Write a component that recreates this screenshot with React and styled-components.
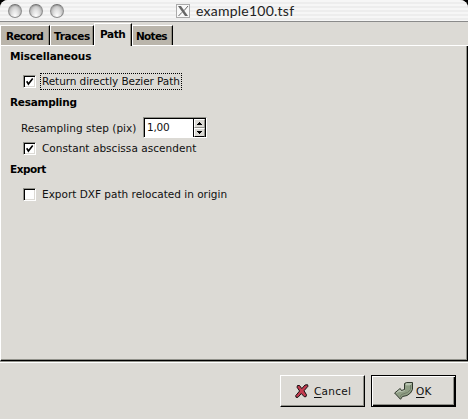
import React from "react";
import styled, { createGlobalStyle, css } from "styled-components";

const Global = createGlobalStyle`
  * { box-sizing: border-box; }
  html, body { margin: 0; padding: 0; background: #000; overflow: hidden; }
`;

const Window = styled.div`
  width: 468px;
  height: 419px;
  display: flex;
  flex-direction: column;
  background: #dcdad5;
  border-radius: 8px 8px 0 0;
  overflow: hidden;
  font-family: "DejaVu Sans", sans-serif;
  font-size: 10.5px;
  line-height: 14px;
  color: #101010;
  white-space: nowrap;
  cursor: default;
`;

const TitleBar = styled.header`
  height: 22px;
  flex: none;
  display: flex;
  align-items: center;
  padding: 0 0 0 8px;
  border-bottom: 1px solid #8a8a8a;
  background: repeating-linear-gradient(180deg, #f6f6f6 0 2px, #ededed 2px 4px);
`;

const Lights = styled.div`
  display: flex;
  gap: 7px;
  width: 168px;
`;

const Light = styled.span`
  width: 14px;
  height: 14px;
  border-radius: 50%;
  border: 1px solid #8d8d8d;
  border-top-color: #707070;
  background: radial-gradient(ellipse at 50% 95%, #fff 0, #e2e2e2 40%, #b8b8b8 80%);
  box-shadow: inset 0 1px 1px #a2a2a2;
`;

const Title = styled.h1`
  margin: 0 0 0 6px;
  font: 14px/20px "Lato", sans-serif;
  letter-spacing: 0.24px;
  color: #222;
  padding-top: 1px;
`;

const TabStrip = styled.nav`
  height: 24px;
  flex: none;
  display: flex;
  align-items: flex-end;
  border-bottom: 1px solid #fff;
`;

const Tab = styled.button`
  width: ${(p) => p.$w}px;
  height: 20px;
  padding: 0 0 0 ${(p) => p.$pad}px;
  border: 0 solid;
  border-width: 1px 1px 0 1px;
  border-color: #fff #000 #000 #fff;
  background: #bab5ab;
  box-shadow: inset -1px 0 #918e83;
  font: bold 10.5px/18px "DejaVu Sans", sans-serif;
  letter-spacing: ${(p) => p.$ls}px;
  color: #000;
  text-align: left;
  ${(p) => p.$active && css`
    height: 23px;
    margin-bottom: -1px;
    padding-bottom: 2px;
    background: #dcdad5;
  `}
`;

const Page = styled.main`
  height: 315px;
  flex: none;
  border: solid;
  border-width: 0 1px 1px 1px;
  border-color: #000 #000 #000 #fff;
  box-shadow: inset -1px -1px #91918a;
  padding: 3px 0 0 9px;
`;

const Heading = styled.h2`
  margin: ${(p) => p.$top || 0}px 0 0;
  font-size: 10.5px;
  line-height: 14px;
  height: 14px;
  color: #000;
  letter-spacing: ${(p) => p.$ls || 0}px;
`;

const Row = styled.label`
  display: flex;
  align-items: center;
  height: ${(p) => p.$h}px;
  margin: ${(p) => p.$m};
`;

const Box = styled.span`
  width: 13px;
  height: 13px;
  flex: none;
  border: 1px solid;
  border-color: #91918a #fff #fff #91918a;
  box-shadow: inset 1px 1px #000, inset -1px -1px #dcdad5;
  background: #fff;
  display: block;
  svg { display: block; }
`;

const Caption = styled.span`
  margin-left: 4px;
  padding: 0 1px;
  height: 17px;
  line-height: 15px;
  border: 1px ${(p) => (p.$focus ? "dotted #000" : "solid transparent")};
  width: ${(p) => (p.$focus ? "142px" : "auto")};
  letter-spacing: ${(p) => p.$ls || 0}px;
`;

const FieldName = styled.span`
  width: 122px;
  letter-spacing: 0.04px;
`;

const Spin = styled.span`
  width: 64px;
  height: 21px;
  display: flex;
  border: 1px solid;
  border-color: #91918a #fff #fff #91918a;
  box-shadow: inset 1px 1px #000;
  background: #fff;
  padding: 1px 0 0 1px;
`;

const SpinValue = styled.span`
  flex: 1;
  padding-left: 2px;
  line-height: 16px;
  letter-spacing: -0.2px;
`;

const Steps = styled.span`
  width: 13px;
  display: flex;
  flex-direction: column;
  border-left: 1px solid #000;
  border-right: 1px solid #000;
`;

const Step = styled.span`
  flex: 1;
  display: flex;
  align-items: center;
  justify-content: center;
  background: #dcdad5;
  border: 1px solid;
  border-color: #fff #91918a #91918a #fff;
  &:last-child { border-bottom-color: #000; }
`;

const Actions = styled.footer`
  flex: 1;
  border-top: 1px solid #91918a;
  box-shadow: inset 0 1px #fff;
  display: flex;
  justify-content: flex-end;
  gap: 6px;
  padding: 13px 12px 0 0;
`;

const Button = styled.button`
  width: 85px;
  height: 32px;
  padding: 0 0 0 ${(p) => p.$pad}px;
  display: flex;
  align-items: center;
  gap: ${(p) => p.$gap}px;
  border: 1px solid;
  border-color: #fff #000 #000 #fff;
  box-shadow: inset -1px -1px #91918a;
  background: #dcdad5;
  color: #101010;
  font: 10.5px/14px "DejaVu Sans", sans-serif;
  letter-spacing: ${(p) => p.$ls}px;
  svg { flex: none; }
  ${(p) => p.$default && css`
    border-color: #000;
    box-shadow: inset 1px 1px #fff, inset -1px -1px #000, inset -2px -2px #91918a;
  `}
`;

const Key = styled.span`
  text-decoration: underline;
  text-underline-offset: 2px;
`;

const Check = () => (
  <svg width="11" height="11" viewBox="0 0 11 11">
    <path d="M2.7 5.3L4.4 8L8.7 2.5" fill="none" stroke="#000" strokeWidth="1.6" />
  </svg>
);

const Arrow = ({ down }) => (
  <svg width="5" height="3" viewBox="0 0 5 3" shapeRendering="crispEdges">
    <path d={down ? "M0 0H5V1H4V2H3V3H2V2H1V1H0Z" : "M2 0H3V1H4V2H5V3H0V2H1V1H2Z"} />
  </svg>
);

const XIcon = () => (
  <svg width="14" height="14" viewBox="0 0 14 14">
    <rect x=".5" y=".5" width="13" height="13" fill="#f8f8f8" stroke="#aaa" />
    <path d="M2 2H5L12 12H9Z" fill="#666" />
    <path d="M12 2L8 6.7M6 8.3L2.5 12" stroke="#666" strokeWidth="1" />
  </svg>
);

const CancelIcon = () => (
  <svg width="14" height="14" viewBox="0 0 14 14">
    <path d="M2.5 1.5H4.5L6.8 4.6L10 1L12.5 .7L13 2.2L9 6.8L11.5 10.8L11 12.7H9.2L6.3 9.5L3 13.3H1L.7 11.7L4.6 7L2 3.2Z" fill="#c43c50" stroke="#171012" />
  </svg>
);

const OkIcon = () => (
  <svg width="20" height="18" viewBox="0 0 20 18">
    <path d="M10.5 1.5L12.5 .5H18.5V7.5L16.5 11L13 13.5L8.5 14.5L6.5 17.3L.6 11L6.2 6.5L7.5 8.5L10.5 7.5Z" fill="#8f9e85" stroke="#30382d" />
    <path d="M12 2L13 1.5H17.5L16 3H12ZM2.2 10.8L6 7.8L7.2 9.7L11 8.5" fill="#b5c0ae" stroke="#c3ccbd" strokeWidth=".6" />
    <path d="M16.5 3V7.5L13.5 10.5L7.5 12.5L6.2 15" fill="none" stroke="#6f7c67" strokeWidth=".9" />
  </svg>
);

export default function App() {
  return (
    <>
      <Global />
      <Window>
        <TitleBar>
          <Lights><Light /><Light /><Light /></Lights>
          <XIcon />
          <Title>example100.tsf</Title>
        </TitleBar>
        <TabStrip>
          <Tab $w={50} $pad={5} $ls={-0.7}>Record</Tab>
          <Tab $w={44} $pad={3} $ls={-0.32}>Traces</Tab>
          <Tab $w={38} $pad={5} $ls={-0.4} $active>Path</Tab>
          <Tab $w={41} $pad={3} $ls={-0.7}>Notes</Tab>
        </TabStrip>
        <Page>
          <Heading $ls={-0.17}>Miscellaneous</Heading>
          <Row $h={17} $m="10px 0 0 13px">
            <Box><Check /></Box>
            <Caption $focus $ls={-0.08}>Return directly Bezier Path</Caption>
          </Row>
          <Heading $top={5} $ls={-0.25}>Resampling</Heading>
          <Row $h={21} $m="8px 0 0 11px">
            <FieldName>Resampling step (pix)</FieldName>
            <Spin>
              <SpinValue>1,00</SpinValue>
              <Steps><Step><Arrow /></Step><Step><Arrow down /></Step></Steps>
            </Spin>
          </Row>
          <Row $h={17} $m="2px 0 0 13px">
            <Box><Check /></Box>
            <Caption $ls={0.04}>Constant abscissa ascendent</Caption>
          </Row>
          <Heading $top={5} $ls={-0.5}>Export</Heading>
          <Row $h={17} $m="10px 0 0 13px">
            <Box />
            <Caption>Export DXF path relocated in origin</Caption>
          </Row>
        </Page>
        <Actions>
          <Button $pad={14} $gap={5} $ls={0.25}><CancelIcon /><span><Key>C</Key>ancel</span></Button>
          <Button $default $pad={22} $gap={2} $ls={0.2}><OkIcon /><span><Key>O</Key>K</span></Button>
        </Actions>
      </Window>
    </>
  );
}
